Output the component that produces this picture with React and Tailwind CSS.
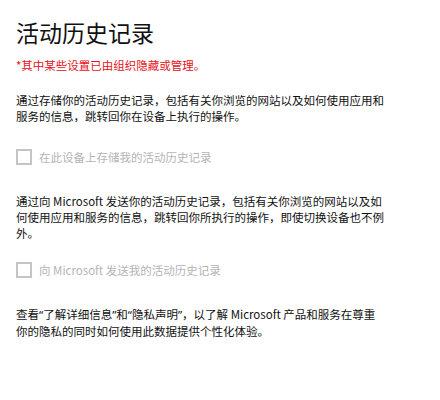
export default function App() {
  const font = { fontFamily: '"Noto Sans CJK SC", "Noto Sans", sans-serif' };
  const Q = ({ c }) => <span style={{ fontFamily: '"Noto Sans", sans-serif' }}>{c}</span>;
  return (
    <div className="w-[440px] h-[400px] bg-white overflow-hidden" style={font}>
      <div className="flex flex-col pl-4 pt-[17px]">
        <h1 className="text-[23px] leading-[30px] text-[#111] font-normal">活动历史记录</h1>
        <p className="mt-[10px] text-[11.5px] leading-[16px] text-[#e81123] whitespace-nowrap">*其中某些设置已由组织隐藏或管理。</p>
        <p className="mt-[19px] text-[11.5px] leading-[16px] text-[#111] whitespace-nowrap">
          通过存储你的活动历史记录，包括有关你浏览的网站以及如何使用应用和<br />
          服务的信息，跳转回你在设备上执行的操作。
        </p>
        <label className="mt-[25px] flex items-center gap-[7px]">
          <span className="w-[16px] h-[16px] border-2 border-[#c4c4c4] bg-white" />
          <span className="text-[11.5px] leading-[16px] text-[#b4b4b4] whitespace-nowrap">在此设备上存储我的活动历史记录</span>
        </label>
        <p className="mt-[28px] text-[11.5px] leading-[16px] text-[#111] whitespace-nowrap">
          通过向 Microsoft 发送你的活动历史记录，包括有关你浏览的网站以及如<br />
          何使用应用和服务的信息，跳转回你所执行的操作，即使切换设备也不例<br />
          外。
        </p>
        <label className="mt-[21px] flex items-center gap-[7px]">
          <span className="w-[16px] h-[16px] border-2 border-[#c4c4c4] bg-white" />
          <span className="text-[11.5px] leading-[16px] text-[#b4b4b4] whitespace-nowrap">向 Microsoft 发送我的活动历史记录</span>
        </label>
        <p className="mt-[28px] text-[11.5px] leading-[16px] text-[#111] whitespace-nowrap">
          查看<Q c="“" />了解详细信息<Q c="”" />和<Q c="“" />隐私声明<Q c="”" />，以了解 Microsoft 产品和服务在尊重<br />
          你的隐私的同时如何使用此数据提供个性化体验。
        </p>
      </div>
    </div>
  );
}
